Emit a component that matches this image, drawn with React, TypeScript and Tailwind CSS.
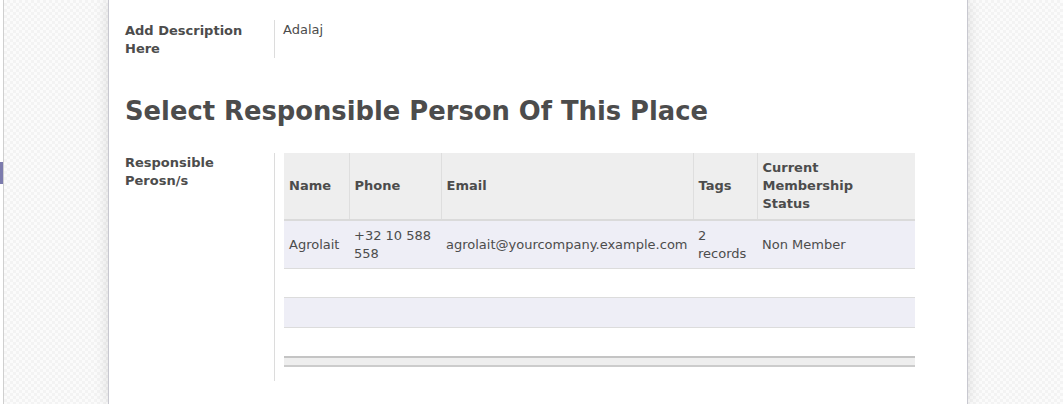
import React from "react";

// one partner row shown in the responsible-person list
interface Partner {
  name: string;
  phone: string;
  email: string;
  tags: string;
  status: string;
}

const partners: Partner[] = [
  {
    name: "Agrolait",
    phone: "+32 10 588 558",
    email: "agrolait@yourcompany.example.com",
    tags: "2 records",
    status: "Non Member",
  },
];

const checker =
  "bg-[repeating-conic-gradient(#f3f3f3_0_25%,#fbfbfb_0_50%)] bg-[length:6px_6px]";

const App: React.FC = () => {
  return (
    <div
      className="flex h-[404px] w-[1063px] overflow-hidden text-[13px] text-[#4c4c4c]"
      style={{ fontFamily: '"DejaVu Sans", Verdana, sans-serif' }}
    >
      {/* left edge with the active tab marker */}
      <div className="flex w-[4px] shrink-0 border-r border-[#cfcfcf] bg-white">
        <div className="mt-[162px] h-[22px] w-[3px] bg-[#7c7bad]" />
      </div>

      {/* background + sheet */}
      <div className={`flex flex-1 ${checker}`}>
        <div className="ml-[104px] w-[860px] shrink-0 border-x border-[#c8c8d0] bg-white px-4 pt-5 shadow-[0_0_14px_rgba(0,0,0,0.12)]">
          {/* description row */}
          <div className="flex">
            <div className="w-[149px] shrink-0 pt-[2px] font-bold leading-[18px]">
              Add Description
              <br />
              Here
            </div>
            <div className="flex-1 border-l border-[#dcdcdc] pl-2 leading-[18px]">
              <div className="h-[37px] pt-[1px]">Adalaj</div>
            </div>
          </div>

          <h1 className="mt-[36px] text-[25.8px] font-bold leading-[34px] text-[#4c4c4c]">
            Select Responsible Person Of This Place
          </h1>

          {/* responsible person row */}
          <div className="mt-[25px] flex">
            <div className="w-[149px] shrink-0 pt-[1px] font-bold leading-[18px]">
              Responsible
              <br />
              Perosn/s
            </div>
            <div className="h-[228px] flex-1 border-l border-[#dcdcdc] pl-[9px]">
              <table className="w-[631px] table-fixed border-collapse leading-[18px]">
                <colgroup>
                  <col className="w-[65px]" />
                  <col className="w-[92px]" />
                  <col className="w-[252px]" />
                  <col className="w-[64px]" />
                  <col className="w-[158px]" />
                </colgroup>
                <thead>
                  <tr className="border-b-2 border-[#dadada] bg-[#eeeeee] font-bold">
                    <th className="border-r border-[#dedede] px-[5px] py-[6px] text-left align-middle">Name</th>
                    <th className="border-r border-[#dedede] px-[5px] py-[6px] text-left align-middle">Phone</th>
                    <th className="border-r border-[#dedede] px-[5px] py-[6px] text-left align-middle">Email</th>
                    <th className="border-r border-[#dedede] px-[5px] py-[6px] text-left align-middle">Tags</th>
                    <th className="px-[5px] py-[6px] text-left align-middle">
                      Current
                      <br />
                      Membership
                      <br />
                      Status
                    </th>
                  </tr>
                </thead>
                <tbody>
                  {partners.map((p) => (
                    <tr key={p.email} className="border-b border-[#dcdcdc] bg-[#eeeef6]">
                      <td className="px-[5px] pb-[5px] pt-[6px] align-middle">{p.name}</td>
                      <td className="px-[5px] pb-[5px] pt-[6px] align-middle">{p.phone}</td>
                      <td className="px-[5px] pb-[5px] pt-[6px] align-middle">{p.email}</td>
                      <td className="px-[5px] pb-[5px] pt-[6px] align-middle">{p.tags}</td>
                      <td className="px-[5px] pb-[5px] pt-[6px] align-middle">{p.status}</td>
                    </tr>
                  ))}
                  <tr className="h-[29px] border-b border-[#dcdcdc] bg-white">
                    <td colSpan={5} />
                  </tr>
                  <tr className="h-[30px] border-b border-[#dcdcdc] bg-[#eeeef6]">
                    <td colSpan={5} />
                  </tr>
                  <tr className="h-[29px] bg-white">
                    <td colSpan={5} />
                  </tr>
                </tbody>
                <tfoot>
                  <tr className="h-[9px] border-y-2 border-t-[#c4c4c4] border-b-[#cccccc] bg-[#eeeeee]">
                    <td colSpan={5} />
                  </tr>
                </tfoot>
              </table>
            </div>
          </div>
        </div>
      </div>
    </div>
  );
};

export default App;
